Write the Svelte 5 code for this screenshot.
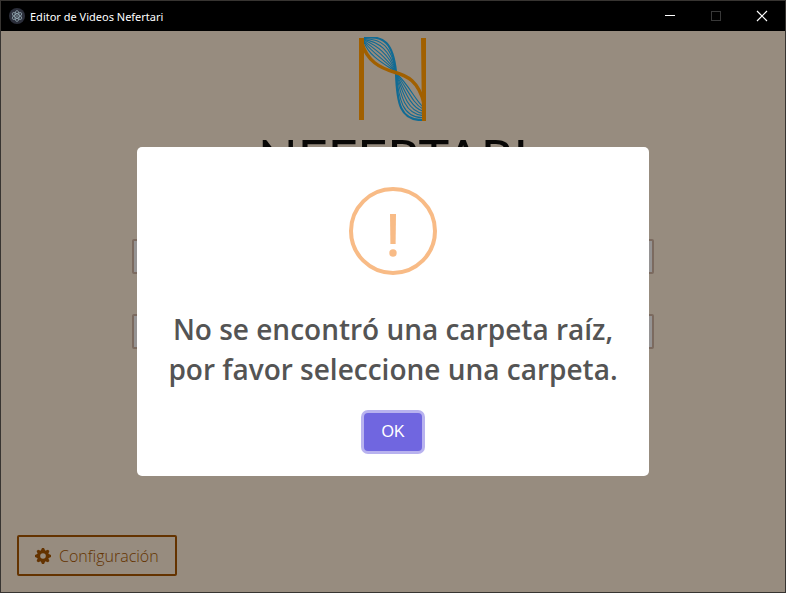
<script>
  let rootFolder = $state('');
  let outputFolder = $state('');

  // Strands of the ribbon: each one bows a little less than the one before.
  const strands = [0, 1, 2, 3, 4, 5, 6];
  const upper = (i) =>
    `M5 ${1 + i * 0.7} C${25 - i * 2.4} ${-2 + i * 3.6} ${34 - i * 1.6} ${6 + i * 3.4} 37 35`;
  const lower = (i) =>
    `M37 36 C${38 + i * 2} ${66 - i * 3} ${41 + i * 2.6} ${84 - i * 3.4} 64 ${83 - i * 2.2}`;
</script>

<div class="window">
  <header class="titlebar">
    <svg class="app-icon" viewBox="0 0 16 16" aria-hidden="true">
      <circle cx="8" cy="8" r="8" fill="#2b2e3a" />
      <g fill="none" stroke="#9fb4bd" stroke-width="0.7">
        <ellipse cx="8" cy="8" rx="5.4" ry="2.1" transform="rotate(30 8 8)" />
        <ellipse cx="8" cy="8" rx="5.4" ry="2.1" transform="rotate(90 8 8)" />
        <ellipse cx="8" cy="8" rx="5.4" ry="2.1" transform="rotate(150 8 8)" />
      </g>
      <circle cx="8" cy="8" r="0.8" fill="#9fb4bd" />
    </svg>
    <span class="app-title">Editor de Videos Nefertari</span>
    <div class="controls">
      <button aria-label="Minimizar">
        <svg viewBox="0 0 12 12"><path d="M1 5.5h10" stroke="#fff" /></svg>
      </button>
      <button aria-label="Maximizar" disabled>
        <svg viewBox="0 0 12 12"><rect x="1.5" y="1.5" width="9" height="9" fill="none" stroke="#383838" /></svg>
      </button>
      <button aria-label="Cerrar">
        <svg viewBox="0 0 12 12"><path d="M1 1l10 10M11 1L1 11" stroke="#fff" stroke-width="1.2" /></svg>
      </button>
    </div>
  </header>

  <div class="content">
    <main>
      <div class="brand">
        <svg class="logo" viewBox="0 0 68 84" aria-hidden="true">
          <g fill="none" stroke="#116b94">
            {#each strands as i}
              <path d={upper(i)} stroke-width={i === 0 ? 2.2 : 1.1} />
              <path d={lower(i)} stroke-width={i === 0 ? 2.2 : 1.1} />
            {/each}
          </g>
          <path d="M3 6C8 24 21 31 35 35S59 44 65 66" fill="none" stroke="#a16000" stroke-width="3.4" />
          <path d="M0 1h5v82H0zM62 1h5v83h-4z" fill="#a16000" />
        </svg>
        <span class="brand-name">NEFERTARI</span>
      </div>
      <form>
        <input type="text" aria-label="Carpeta raíz" bind:value={rootFolder} />
        <input type="text" aria-label="Carpeta de salida" bind:value={outputFolder} />
      </form>
    </main>
    <footer>
      <button class="config">
        <svg viewBox="0 0 16 16" aria-hidden="true">
          <g fill="#643300">
            {#each [0, 45, 90, 135] as angle}
              <path d="M7 0h2l1.6 3.4v9.2L9 16H7l-1.6-3.4V3.4z" transform={`rotate(${angle} 8 8)`} />
            {/each}
            <circle cx="8" cy="8" r="5.4" />
          </g>
          <circle cx="8" cy="8" r="2.8" fill="#978c7f" />
        </svg>
        Configuración
      </button>
    </footer>

    <div class="overlay">
      <div class="dialog" role="alertdialog" aria-modal="true" aria-labelledby="alert-title">
        <div class="alert-icon">
          <svg viewBox="0 0 80 80" aria-hidden="true">
            <path d="M37 23h6l-.4 30h-5.2z" fill="#f8bb86" />
            <circle cx="40" cy="62" r="3.7" fill="#f8bb86" />
          </svg>
        </div>
        <h2 id="alert-title">No se encontró una carpeta raíz, por favor seleccione una carpeta.</h2>
        <button class="ok">OK</button>
      </div>
    </div>
  </div>
</div>

<style>
  .window {
    box-sizing: border-box;
    display: flex;
    flex-direction: column;
    min-height: 100vh;
    border: 1px solid #373431;
    background: #978c7f;
    font-family: 'Open Sans', 'Noto Sans', sans-serif;
  }

  button {
    margin: 0;
    font-family: inherit;
  }

  .titlebar {
    display: flex;
    align-items: center;
    height: 30px;
    padding-left: 8px;
    background: #000;
    color: #fff;
  }

  .app-icon {
    width: 16px;
    height: 16px;
    margin-right: 5px;
  }

  .app-title {
    font-family: 'Noto Sans', sans-serif;
    font-size: 11px;
  }

  .controls {
    display: flex;
    height: 100%;
    margin-left: auto;
  }

  .controls button {
    display: flex;
    align-items: center;
    justify-content: center;
    width: 46px;
    padding: 0;
    border: 0;
    background: none;
  }

  .controls svg {
    width: 12px;
    height: 12px;
  }

  .content {
    position: relative;
    display: flex;
    flex: 1;
    flex-direction: column;
  }

  main {
    display: flex;
    flex: 1;
    flex-direction: column;
    align-items: center;
    padding-top: 6px;
  }

  .brand {
    display: flex;
    flex-direction: column;
    align-items: center;
    gap: 8px;
  }

  .logo {
    width: 68px;
    height: 84px;
  }

  .brand-name {
    color: #080706;
    font-family: Lato, sans-serif;
    font-size: 52px;
    line-height: 58px;
  }

  form {
    display: flex;
    flex-direction: column;
    gap: 40px;
    width: 100%;
    max-width: 522px;
    margin-top: 52px;
  }

  input {
    box-sizing: border-box;
    width: 100%;
    height: 35px;
    padding: 4px 12px;
    border: 2px solid #7b6a5f;
    border-radius: 2px;
    background: #959393;
    font: inherit;
  }

  footer {
    padding: 16px;
  }

  .config {
    display: flex;
    align-items: center;
    gap: 8px;
    height: 41px;
    padding: 0 16px;
    border: 2px solid #643300;
    border-radius: 2px;
    background: none;
    color: #643300;
    font-size: 16px;
    font-weight: 300;
  }

  .config svg {
    width: 16px;
    height: 16px;
  }

  .overlay {
    position: absolute;
    inset: 0;
    display: flex;
    align-items: center;
    justify-content: center;
  }

  .dialog {
    box-sizing: border-box;
    display: flex;
    flex-direction: column;
    align-items: center;
    width: 100%;
    max-width: 512px;
    padding: 40px 20px 25px;
    border-radius: 5px;
    background: #fff;
  }

  .alert-icon {
    width: 80px;
    height: 80px;
    border: 4px solid #f8bb86;
    border-radius: 50%;
  }

  .alert-icon svg {
    display: block;
  }

  h2 {
    margin: 34px 0 24px;
    color: #545454;
    font-size: 28px;
    font-weight: 600;
    line-height: 40px;
    text-align: center;
  }

  .ok {
    height: 38px;
    padding: 0 17px;
    border: 0;
    border-radius: 4px;
    background: #7066e0;
    box-shadow: 0 0 0 3px #b8b2ef;
    color: #fff;
    font-family: 'Liberation Sans', Arial, sans-serif;
    font-size: 16px;
  }
</style>
